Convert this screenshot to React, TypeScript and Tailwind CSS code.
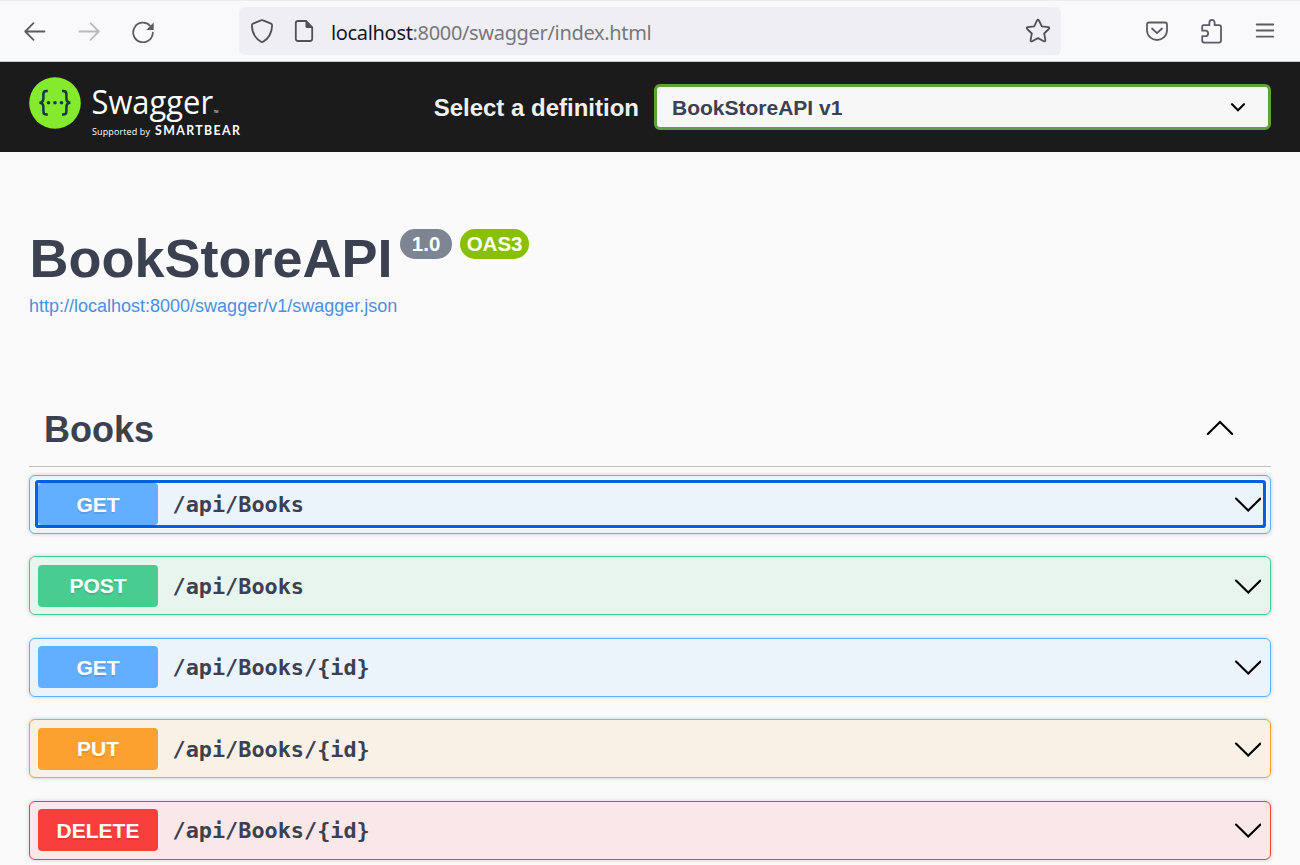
import React from "react";

const stroke = {
  fill: "none",
  stroke: "currentColor",
  strokeWidth: 1.8,
  strokeLinecap: "round" as const,
  strokeLinejoin: "round" as const,
};

function BrowserBar() {
  return (
    <div className="flex h-[62px] items-center border-t border-b border-t-[#ececf0] border-b-[#c5cdc3] bg-[#f9f9fb] text-[#5b5b66]">
      <svg className="ml-[23px] size-6 shrink-0" viewBox="0 0 24 24" {...stroke}>
        <path d="M21.5 12.5H2.2M10.5 4.2L2.2 12.5L10.5 20.8" />
      </svg>
      <svg className="ml-[30px] size-6 shrink-0 text-[#b9b9bf]" viewBox="0 0 24 24" {...stroke}>
        <path d="M2.3 12.5H21.8M13.5 4.2L21.8 12.5L13.5 20.8" />
      </svg>
      <svg className="ml-[30px] size-6 shrink-0" viewBox="0 0 24 24" {...stroke}>
        <path d="M21.8 13.7A9.8 9.8 0 1 1 19 6.6" />
        <path d="M22.7 3.4V11H15.2Z" fill="currentColor" stroke="none" />
      </svg>
      <div className="ml-[84px] flex h-12 w-[822px] shrink-0 items-center rounded-md bg-[#efeef3] text-[#515158]">
        <svg className="ml-[11px] size-6 shrink-0" viewBox="0 0 24 24" {...stroke}>
          <path d="M10.9 1.4Q12 .8 13.1 1.4L21 4.7Q22.2 5.2 22.1 6.6C21.9 13 19.2 19 13 22.8Q12 23.4 11 22.8C4.8 19 2.1 13 1.9 6.6Q1.8 5.2 3 4.7Z" />
        </svg>
        <svg className="ml-[18px] size-6 shrink-0" viewBox="0 0 24 24" {...stroke}>
          <path d="M14 2H6Q3.8 2 3.8 4.2V19.8Q3.8 22 6 22H18Q20.2 22 20.2 19.8V8.5L14 2Z" />
          <path d="M13.5 1.5H14.5L21 8V8.9H15Q13.5 8.9 13.5 7.4Z" fill="currentColor" stroke="none" />
        </svg>
        <div className="ml-[15px] flex-1 pt-[3px] font-['Noto_Sans',sans-serif] text-[20px] leading-7 tracking-[-0.33px] whitespace-nowrap text-[#77777f]">
          <span className="text-[#18181f]">localhost</span>:8000/swagger/index.html
        </div>
        <svg className="mr-[10px] size-[26px] shrink-0" viewBox="0 0 26 26" {...stroke}>
          <path d="M12 2.5Q13 .9 14 2.5L16.8 8.4L23.3 9.2Q25 9.6 23.8 11L19.2 15.5L20.4 22.1Q20.5 24 18.8 23.2L13 20.1L7.2 23.2Q5.5 24 5.6 22.1L6.8 15.5L2.2 11Q1 9.6 2.7 9.2L9.2 8.4Z" />
        </svg>
      </div>
      <svg className="ml-[84px] size-6 shrink-0" viewBox="0 0 24 24" {...stroke}>
        <path d="M4 3.5H20Q22 3.5 22 5.5V11.2C22 16.8 17.5 21 12 21S2 16.8 2 11.2V5.5Q2 3.5 4 3.5ZM7 9.5L12 14.2L17 9.5" />
      </svg>
      <svg className="ml-[31px] h-[26px] w-6 shrink-0" viewBox="0 0 24 26" {...stroke}>
        <path d="M2.2 12.7V8.7Q2.2 7.2 3.7 7.2H9.4V4.5A2.6 2.6 0 0 1 14.6 4.5V7.2H19Q21 7.2 21 9.2V22.6Q21 24.6 19 24.6H4.2Q2.2 24.6 2.2 22.6V18.2H5.4A2.75 2.75 0 0 0 5.4 12.7Z" />
      </svg>
      <svg className="ml-[29px] size-6 shrink-0" viewBox="0 0 24 24" {...stroke}>
        <path d="M3.7 5.5H20.3M3.7 11.5H20.3M3.7 17.7H20.3" />
      </svg>
    </div>
  );
}

function Logo() {
  return (
    <svg className="h-[85px] w-[240px]" viewBox="20 65 240 85">
      <circle cx="55" cy="103" r="25.8" fill="#85ea2d" />
      <g fill="none" stroke="#173647" strokeWidth="2.5">
        <path d="M47.8 90.9H46.5Q43.4 90.9 43.4 94V98.3Q43.4 102.6 39.4 102.7Q43.4 102.8 43.4 107.1V111.4Q43.4 114.5 46.5 114.5H47.8" />
        <path d="M62 90.9H63.3Q66.4 90.9 66.4 94V98.3Q66.4 102.6 70.4 102.7Q66.4 102.8 66.4 107.1V111.4Q66.4 114.5 63.3 114.5H62" />
      </g>
      <g fill="#173647">
        <circle cx="48.5" cy="102.7" r="1.8" />
        <circle cx="55" cy="102.7" r="1.8" />
        <circle cx="61.5" cy="102.7" r="1.8" />
      </g>
      <g fill="white" fontFamily="'Open Sans', sans-serif">
        <text x="91.5" y="114" fontSize="33" textLength="121.5" lengthAdjust="spacingAndGlyphs">Swagger</text>
        <text x="213.8" y="113.4" fontSize="3.5" textLength="4.6">TM</text>
        <text x="92" y="134.7" fontSize="9" textLength="58">Supported by</text>
        <text x="155" y="134.5" fontSize="12.3" fontWeight="700" fontFamily="Lato, sans-serif" textLength="85">SMARTBEAR</text>
      </g>
    </svg>
  );
}

function TopBar() {
  return (
    <div className="flex h-[90px] items-center bg-[#1b1b1b] pr-[29px] pl-5">
      <div className="mt-px h-[85px] w-[240px] shrink-0"><Logo /></div>
      <div className="flex flex-1 items-center justify-end">
        <span className="mt-[2px] mr-[15px] text-[24px] leading-none font-bold whitespace-nowrap text-[#f0f0f0]">Select a definition</span>
        <div className="flex h-[46px] w-[617px] items-center justify-between rounded-[6px] border-3 border-[#62a03f] bg-[#f7f7f7] pr-5 pl-[15px]">
          <span className="text-[21px] leading-none font-bold text-[#3b4151]">BookStoreAPI v1</span>
          <svg className="size-5" viewBox="0 0 20 20" fill="none" stroke="black" strokeWidth="2.2" strokeLinecap="round">
            <path d="M4 7.2L10 13.2L16 7.2" />
          </svg>
        </div>
      </div>
    </div>
  );
}

type Operation = {
  method: string;
  path: string;
  frame: string;
  badge: string;
  focused?: boolean;
};

const blue = { frame: "border-[#61affe] bg-[#ebf3fb]", badge: "bg-[#61affe]" };

const operations: Operation[] = [
  { method: "GET", path: "/api/Books", ...blue, focused: true },
  { method: "POST", path: "/api/Books", frame: "border-[#49cc90] bg-[#e8f5ef]", badge: "bg-[#49cc90]" },
  { method: "GET", path: "/api/Books/{id}", ...blue },
  { method: "PUT", path: "/api/Books/{id}", frame: "border-[#fca130] bg-[#faf1e6]", badge: "bg-[#fca130]" },
  { method: "DELETE", path: "/api/Books/{id}", frame: "border-[#f93e3e] bg-[#fae7e7]", badge: "bg-[#f93e3e]" },
];

function OperationRow({ method, path, frame, badge, focused }: Operation) {
  return (
    <div className={`mb-[22.5px] h-[59px] rounded-[6px] border pr-[7px] pl-2 pt-[7.3px] shadow-[0_0_4px_rgba(0,0,0,0.19)] ${frame}`}>
      <div className={`flex h-[42px] items-center ${focused ? "rounded-[1px] shadow-[0_0_0_3px_#0060df,0_0_0_4px_#fff]" : ""}`}>
        <div className={`flex h-[42px] w-[120px] items-center justify-center rounded-[4px] text-[21px] leading-none font-bold text-white [text-shadow:0_1.5px_0_rgba(0,0,0,0.1)] ${badge}`}>
          {method}
        </div>
        <span className="ml-[14.5px] flex-1 pt-[2px] font-['DejaVu_Sans_Mono',monospace] text-[21.85px] leading-none font-bold text-[#3b4151]">{path}</span>
        <svg className="mr-[2px] h-[30px] w-[30px]" viewBox="0 0 30 30" fill="none" stroke="black" strokeWidth="2.1" strokeLinecap="round">
          <path d="M5 9.5L17.2 21.5L29.4 9.5" />
        </svg>
      </div>
    </div>
  );
}

export default function App() {
  return (
    <div className="h-[865px] w-[1300px] overflow-hidden bg-[#fafafa] font-['Liberation_Sans',Arial,sans-serif]">
      <BrowserBar />
      <TopBar />
      <main className="px-[29px]">
        <div className="flex h-[142px] items-start pt-[77px]">
          <h1 className="pl-[0.5px] text-[54px] leading-[58px] font-bold text-[#3b4151]">BookStoreAPI</h1>
          <span className="ml-[7.5px] flex h-[30px] w-[52px] items-center justify-center rounded-full bg-[#7d8492] text-[20.5px] font-bold text-white">1.0</span>
          <span className="ml-2 flex h-[30px] w-[69px] items-center justify-center rounded-full bg-[#89bf04] text-[20.5px] font-bold text-white">OAS3</span>
        </div>
        <a className="block h-[98px] text-[18px] leading-6 text-[#4990e2]">http://localhost:8000/swagger/v1/swagger.json</a>
        <div className="mb-[7.9px] flex h-[75px] items-center justify-between border-b border-[#bfc0c3] pr-9 pl-[15px]">
          <h2 className="pt-[2px] text-[36px] leading-none font-bold text-[#3b4151]">Books</h2>
          <svg className="h-[30px] w-[30px]" viewBox="0 0 30 30" fill="none" stroke="black" strokeWidth="2.1" strokeLinecap="round">
            <path d="M2.8 20L15 8L27.2 20" />
          </svg>
        </div>
        {operations.map((op) => (
          <OperationRow key={`${op.method} ${op.path}`} {...op} />
        ))}
      </main>
    </div>
  );
}
